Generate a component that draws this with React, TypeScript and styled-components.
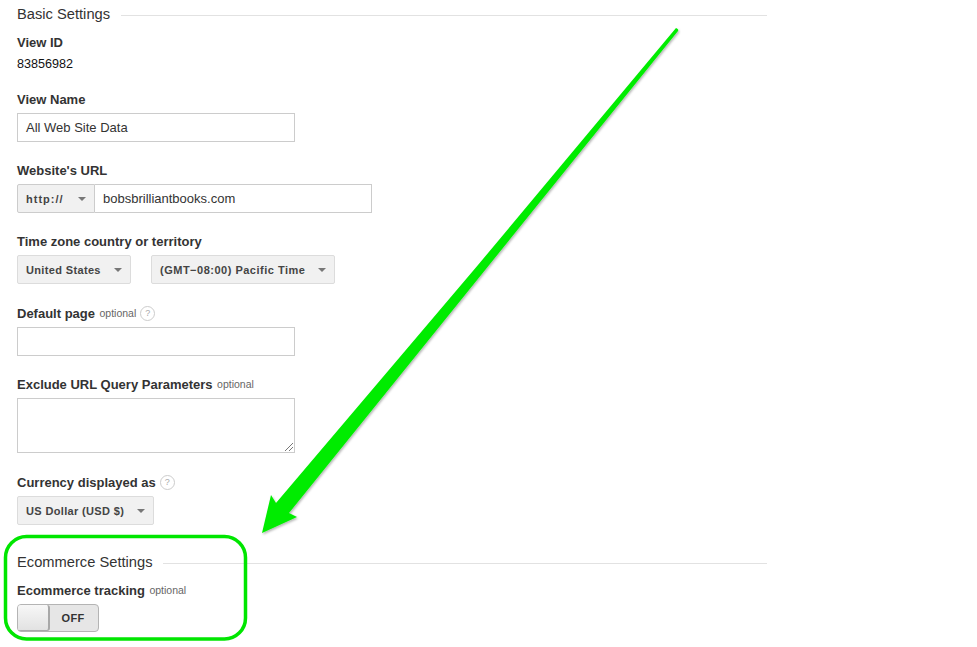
import React from "react";
import styled, { createGlobalStyle } from "styled-components";

const Global = createGlobalStyle`
  html, body { margin: 0; padding: 0; background: #fff; }
  body { font-family: "Liberation Sans", Arial, sans-serif; color: #333; }
`;

const Page = styled.div`
  position: relative;
  width: 977px;
  height: 647px;
  overflow: hidden;
  padding: 5px 0 0 17px;
  box-sizing: border-box;
`;

const Column = styled.div`
  width: 750px;
  display: flex;
  flex-direction: column;
`;

const SectionHead = styled.div<{ $mt?: number }>`
  display: flex;
  align-items: center;
  gap: 10.5px;
  height: 18px;
  margin: ${(p) => p.$mt ?? 0}px 0 12px;
  font-size: 14.7px;
  line-height: 18px;
  color: #333;
  white-space: nowrap;
  &::after {
    content: "";
    flex: 1;
    height: 1px;
    margin-top: 2px;
    background: #e2e2e2;
  }
`;

const Field = styled.div`
  display: flex;
  flex-direction: column;
  align-items: flex-start;
  margin-bottom: 21px;
`;

const Label = styled.div<{ $tall?: boolean }>`
  display: flex;
  align-items: center;
  height: 14px;
  margin-top: ${(p) => (p.$tall ? 0 : -1)}px;
  margin-bottom: 7px;
  padding-top: 1px;
  font-size: 13px;
  line-height: 15px;
  font-weight: 700;
  color: #333;
  white-space: nowrap;
`;

const Optional = styled.span`
  margin-left: 4.5px;
  padding-top: 1px;
  font-size: 10.5px;
  font-weight: 400;
  color: #666;
`;

const Help = styled.span`
  display: inline-flex;
  align-items: center;
  justify-content: center;
  width: 13px;
  height: 13px;
  margin-left: 4px;
  border: 1px solid #ccc;
  border-radius: 50%;
  font-size: 9px;
  font-weight: 400;
  color: #aaa;
`;

const Value = styled.div`
  height: 14px;
  padding-top: 1px;
  font-size: 12.6px;
  line-height: 14px;
  color: #111;
`;

const TextBox = styled.div<{ $w?: number; $joined?: boolean }>`
  display: flex;
  align-items: center;
  box-sizing: border-box;
  width: ${(p) => p.$w ?? 278}px;
  height: 29px;
  padding: 0 8px;
  background: #fff;
  border: 1px solid #ccc;
  border-left-width: ${(p) => (p.$joined ? 0 : 1)}px;
  font-size: 13px;
  color: #333;
  white-space: nowrap;
`;

const TextArea = styled(TextBox)`
  position: relative;
  height: 55px;
`;

const Grip = styled.svg`
  position: absolute;
  right: 0;
  bottom: 0;
`;

const SelectRow = styled.div<{ $gap?: number }>`
  display: flex;
  gap: ${(p) => p.$gap ?? 0}px;
`;

const Select = styled.div<{ $w: number; $ls?: number }>`
  display: flex;
  align-items: center;
  justify-content: space-between;
  box-sizing: border-box;
  width: ${(p) => p.$w}px;
  height: 29px;
  padding: 0 8px;
  background: #f1f1f1;
  border: 1px solid #dcdcdc;
  border-radius: 2px;
  font-size: 11px;
  font-weight: 700;
  letter-spacing: ${(p) => p.$ls ?? 0.35}px;
  color: #444;
  white-space: nowrap;
  &::after {
    content: "";
    width: 0;
    height: 0;
    border-left: 4px solid transparent;
    border-right: 4px solid transparent;
    border-top: 4px solid #777;
    margin-top: 1px;
  }
`;

const JoinedSelect = styled(Select)`
  border-radius: 2px 0 0 2px;
  border-color: #ccc;
`;

const Toggle = styled.div`
  display: flex;
  box-sizing: border-box;
  width: 82px;
  height: 28px;
  border: 1px solid #b4b4b4;
  border-radius: 4px;
  background: #e6e6e6;
  overflow: hidden;
`;

const Knob = styled.div`
  width: 30px;
  background: linear-gradient(#f7f7f7, #e2e2e2);
  border-right: 2px solid #a8a8a8;
  border-bottom: 1px solid #a8a8a8;
  border-radius: 0 3px 3px 0;
`;

const ToggleText = styled.div`
  flex: 1;
  display: flex;
  align-items: center;
  justify-content: center;
  padding-right: 2px;
  font-size: 11px;
  font-weight: 700;
  letter-spacing: 0.3px;
  color: #333;
`;

const Overlay = styled.svg`
  position: absolute;
  left: 0;
  top: 0;
  pointer-events: none;
`;

export default function App() {
  return (
    <Page>
      <Global />
      <Column>
        <SectionHead>Basic Settings</SectionHead>
        <Field>
          <Label>View ID</Label>
          <Value>83856982</Value>
        </Field>
        <Field>
          <Label>View Name</Label>
          <TextBox>All Web Site Data</TextBox>
        </Field>
        <Field>
          <Label>Website's URL</Label>
          <SelectRow>
            <JoinedSelect $w={78} $ls={1}>http://</JoinedSelect>
            <TextBox $w={277} $joined>bobsbrilliantbooks.com</TextBox>
          </SelectRow>
        </Field>
        <Field>
          <Label>Time zone country or territory</Label>
          <SelectRow $gap={20}>
            <Select $w={114}>United States</Select>
            <Select $w={184} $ls={0.5}>(GMT−08:00) Pacific Time</Select>
          </SelectRow>
        </Field>
        <Field>
          <Label $tall>
            Default page<Optional>optional</Optional><Help>?</Help>
          </Label>
          <TextBox />
        </Field>
        <Field>
          <Label>
            Exclude URL Query Parameters<Optional>optional</Optional>
          </Label>
          <TextArea>
            <Grip width="10" height="10" viewBox="0 0 10 10">
              <path d="M1 9 L9 1 M5 9 L9 5" stroke="#777" strokeWidth="1" fill="none" />
            </Grip>
          </TextArea>
        </Field>
        <Field>
          <Label $tall>
            Currency displayed as<Help>?</Help>
          </Label>
          <Select $w={137}>US Dollar (USD $)</Select>
        </Field>
        <SectionHead $mt={7}>Ecommerce Settings</SectionHead>
        <Field>
          <Label>
            Ecommerce tracking<Optional>optional</Optional>
          </Label>
          <Toggle>
            <Knob />
            <ToggleText>OFF</ToggleText>
          </Toggle>
        </Field>
      </Column>
      <Overlay width="977" height="647" viewBox="0 0 977 647">
        <defs>
          <filter id="sh" x="-5%" y="-5%" width="110%" height="110%">
            <feDropShadow dx="1" dy="1.5" stdDeviation="1.2" floodColor="#000" floodOpacity="0.3" />
          </filter>
        </defs>
        <rect x="5.5" y="536.5" width="240" height="102.5" rx="21" fill="none" stroke="#00e600" strokeWidth="3.5" />
        <path
          d="M262 533 L271 495 L276 503 L478 265 L676 28 Q679 29 678 31 L289 513 L297 517 Z"
          fill="#00ec00"
          filter="url(#sh)"
        />
      </Overlay>
    </Page>
  );
}
